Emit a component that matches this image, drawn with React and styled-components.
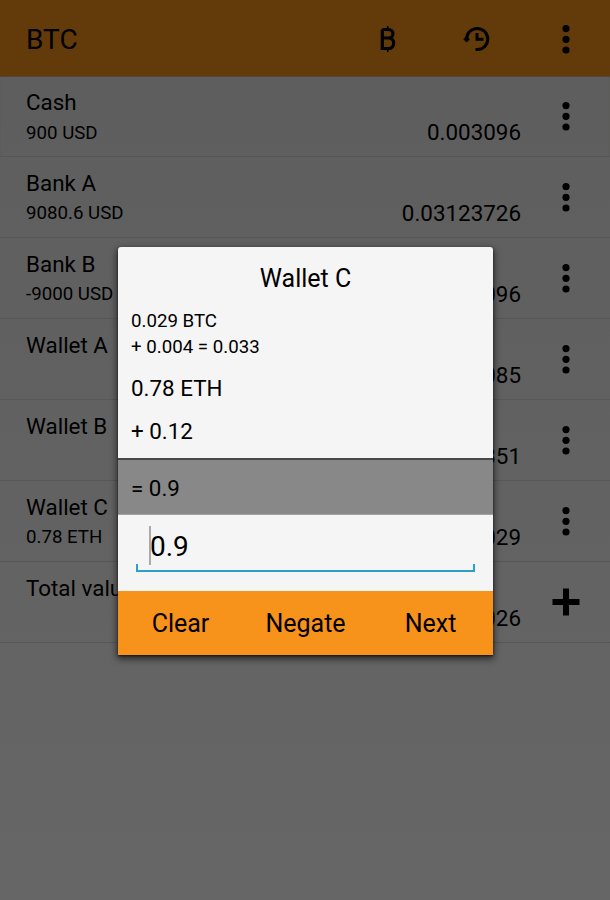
import React from 'react';
import styled, { createGlobalStyle } from 'styled-components';

const GlobalStyle = createGlobalStyle`
  * {
    box-sizing: border-box;
  }

  body {
    margin: 0;
    font-family: Roboto, 'Liberation Sans', sans-serif;
    color: #000;
  }

  svg {
    display: block;
  }
`;

const Screen = styled.div`
  position: relative;
  width: 610px;
  height: 900px;
  overflow: hidden;
  background: linear-gradient(#ebebeb 76px, #fff 100%);
`;

const Toolbar = styled.header`
  display: grid;
  grid-template-columns: 1fr 88px 89px 89px;
  align-items: center;
  justify-items: center;
  height: 76px;
  padding-top: 1px;
  background: #f7931a;
`;

const ToolbarTitle = styled.h1`
  justify-self: start;
  margin: 1px 0 0 26px;
  font-size: 28px;
  font-weight: 400;
  line-height: 33px;
`;

const Row = styled.div`
  display: grid;
  grid-template-columns: 1fr auto 89px;
  height: 81px;
  padding-left: 26px;
  border-bottom: 1px solid #dadada;

  &:nth-child(2) {
    box-shadow: inset 0 1px 1px #c9b08e;
  }
`;

const Account = styled.div`
  padding-top: 12px;
  white-space: nowrap;
`;

const AccountName = styled.div`
  font-size: 22.4px;
  line-height: 28px;
`;

const AccountBalance = styled.div`
  margin-top: ${props => (props.$low ? '4px' : '3px')};
  font-size: 18.7px;
  line-height: 26px;
`;

const Value = styled.div`
  align-self: end;
  padding-bottom: 10px;
  font-size: 22.4px;
  line-height: 28px;
`;

const RowAction = styled.div`
  display: flex;
  justify-content: center;
  padding-top: ${props => (props.$total ? '26px' : '25px')};
`;

const Scrim = styled.div`
  position: absolute;
  inset: 0;
  display: flex;
  align-items: flex-start;
  justify-content: center;
  padding: 247px 0 0 1px;
  background: rgba(0, 0, 0, 0.6);
`;

const Dialog = styled.div`
  width: 375px;
  height: 407.5px;
  display: flex;
  flex-direction: column;
  overflow: hidden;
  background: #f5f5f5;
  border-radius: 3px 3px 1px 1px;
  box-shadow: 0 3px 7px 1px rgba(0, 0, 0, 0.6), 0 1px 2px rgba(0, 0, 0, 0.6);
`;

const DialogTitle = styled.h2`
  margin: 0;
  padding-top: 17px;
  height: 61px;
  font-size: 25px;
  font-weight: 400;
  line-height: 30px;
  text-align: center;
`;

const Entry = styled.div`
  padding-left: 13px;
  font-size: ${props => (props.$small ? '18.7px' : '22.4px')};
  line-height: ${props => (props.$small ? '26px' : '43px')};
`;

const EntryList = styled.div`
  height: 149.5px;

  ${Entry}:nth-child(3) {
    margin-top: 7px;
  }
`;

const Result = styled.div`
  height: 57px;
  padding: 1px 0 0 13px;
  background: #888;
  border-top: 2px solid #484848;
  border-bottom: 1px solid #a2a2a2;
  font-size: 22.4px;
  line-height: 55px;
`;

const Field = styled.div`
  display: flex;
  flex-direction: column;
  height: 76px;
  padding: 11px 18px 0;
`;

const FieldValue = styled.div`
  display: flex;
  height: 38.5px;
  padding-left: 13px;
  font-size: 28px;
  line-height: 42px;
`;

const Caret = styled.span`
  width: 2px;
  height: 39px;
  margin-right: -1px;
  background: #aaa;
`;

const Underline = styled.div`
  height: 8px;
  border: solid #2d9fca;
  border-width: 0 2px 2px;
`;

const Actions = styled.div`
  display: grid;
  grid-template-columns: repeat(3, 1fr);
  flex: 1;
  background: #f7931a;
`;

const ActionButton = styled.button`
  padding: 1px 0 0;
  border: 0;
  background: none;
  color: #000;
  font-family: inherit;
  font-size: 25px;
`;

const MoreIcon = () => (
  <svg width="10" height="30" viewBox="0 0 10 30">
    <circle cx="5" cy="4.6" r="3.6" />
    <circle cx="5" cy="15.3" r="3.6" />
    <circle cx="5" cy="26" r="3.6" />
  </svg>
);

const PlusIcon = () => (
  <svg width="28" height="28" viewBox="0 0 28 28">
    <path d="M0.5 14H27.5M14 0.5V27.5" stroke="#000" strokeWidth="6" />
  </svg>
);

const BitcoinIcon = () => (
  <svg width="18" height="28" viewBox="0 0 18 28" fill="none" stroke="#000">
    <path d="M3.3 4.5H9.5C15.4 4.5 15.4 13 9.5 13H3.3M9.5 13C16.4 13 16.4 23.5 9.5 23.5H3.3V4.5" strokeWidth="3.2" />
    <path d="M8.7 1V4M8.7 24V27" strokeWidth="1.6" />
  </svg>
);

const HistoryIcon = () => (
  <svg width="28" height="28" viewBox="0 0 28 28" fill="none" stroke="#000" strokeWidth="3">
    <path d="M3.6 14A10.6 10.6 0 1 1 14.2 24.6H12.5" />
    <path d="M14 8V14.3H20.5" />
    <path d="M0.3 14.2L3.6 11L6.9 14.2L3.6 17.6Z" fill="#000" stroke="none" />
  </svg>
);

const accounts = [
  { name: 'Cash', balance: '900 USD', value: '0.003096' },
  { name: 'Bank A', balance: '9080.6 USD', value: '0.03123726' },
  { name: 'Bank B', balance: '-9000 USD', value: '-0.03096' },
  { name: 'Wallet A', value: '0.0085' },
  { name: 'Wallet B', value: '0.0351' },
  { name: 'Wallet C', balance: '0.78 ETH', value: '0.029' },
  { name: 'Total value', value: '0.026', total: true }
];

const AccountRow = ({ name, balance, value, total }) => (
  <Row>
    <Account>
      <AccountName>{name}</AccountName>
      {balance && <AccountBalance $low={name === 'Cash'}>{balance}</AccountBalance>}
    </Account>
    <Value>{value}</Value>
    <RowAction $total={total}>
      {total ? <PlusIcon /> : <MoreIcon />}
    </RowAction>
  </Row>
);

const App = () => (
  <>
    <GlobalStyle />
    <Screen>
      <Toolbar>
        <ToolbarTitle>BTC</ToolbarTitle>
        <BitcoinIcon />
        <HistoryIcon />
        <MoreIcon />
      </Toolbar>
      {accounts.map(account => <AccountRow key={account.name} {...account} />)}
      <Scrim>
        <Dialog>
          <DialogTitle>Wallet C</DialogTitle>
          <EntryList>
            <Entry $small>0.029 BTC</Entry>
            <Entry $small>+ 0.004 = 0.033</Entry>
            <Entry>0.78 ETH</Entry>
            <Entry>+ 0.12</Entry>
          </EntryList>
          <Result>= 0.9</Result>
          <Field>
            <FieldValue>
              <Caret />
              0.9
            </FieldValue>
            <Underline />
          </Field>
          <Actions>
            <ActionButton>Clear</ActionButton>
            <ActionButton>Negate</ActionButton>
            <ActionButton>Next</ActionButton>
          </Actions>
        </Dialog>
      </Scrim>
    </Screen>
  </>
);

export default App;
